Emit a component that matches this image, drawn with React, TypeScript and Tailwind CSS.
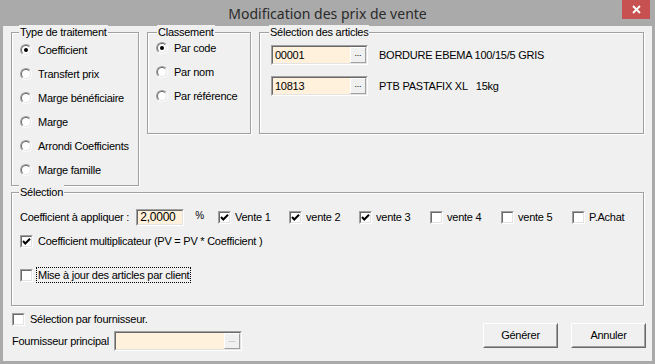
import React from "react";

function Radio({ checked = false }: { checked?: boolean }) {
  return (
    <span className="relative inline-block w-[12px] h-[12px] shrink-0 rounded-full border border-t-[#a0a0a0] border-l-[#a0a0a0] border-r-white border-b-white">
      <span className="absolute inset-0 flex items-center justify-center rounded-full border border-t-[#696969] border-l-[#696969] border-r-[#e3e3e3] border-b-[#e3e3e3] bg-white">
        {checked && <span className="block w-[4px] h-[4px] rounded-full bg-black" />}
      </span>
    </span>
  );
}

function Check({ checked = false }: { checked?: boolean }) {
  return (
    <span className="inline-block w-[13px] h-[13px] shrink-0 border border-t-[#a0a0a0] border-l-[#a0a0a0] border-r-white border-b-white">
      <span className="relative block w-full h-full border border-t-[#696969] border-l-[#696969] border-r-[#e3e3e3] border-b-[#e3e3e3] bg-white">
        {checked && (
          <svg className="absolute left-0 top-0" width="9" height="9" viewBox="0 0 9 9">
            <path d="M1 4 L3.3 6.5 L8 1.8" fill="none" stroke="#000" strokeWidth="2" />
          </svg>
        )}
      </span>
    </span>
  );
}

function Group({
  title,
  titleLeft,
  className,
  children,
}: {
  title: string;
  titleLeft: string;
  className: string;
  children?: React.ReactNode;
}) {
  return (
    <div className={"relative shrink-0 border border-[#a0a0a0] shadow-[inset_1px_1px_0_#ffffff,1px_1px_0_#ffffff] " + className}>
      <span className={"absolute top-[-8px] px-[1px] bg-[#f0f0f0] leading-[14px] " + titleLeft}>{title}</span>
      {children}
    </div>
  );
}

function RadioRow({ label, checked = false }: { label: string; checked?: boolean }) {
  return (
    <div className="flex h-[24px] items-center gap-[6px]">
      <Radio checked={checked} />
      <span className="whitespace-nowrap">{label}</span>
    </div>
  );
}

function Edit({ value, width, disabled = false }: { value: string; width: string; disabled?: boolean }) {
  return (
    <div className={"flex h-[20px] shrink-0 border border-t-[#a0a0a0] border-l-[#a0a0a0] border-r-white border-b-white " + width}>
      <div className="flex flex-1 border border-t-[#696969] border-l-[#696969] border-r-[#e3e3e3] border-b-[#e3e3e3]">
        <div className="flex flex-1 items-center bg-[#fff1dc] pl-[2px] leading-none">{value}</div>
        <div className="flex w-[16px] items-center justify-center border border-t-white border-l-white border-r-[#a0a0a0] border-b-[#a0a0a0] bg-[#f0f0f0]">
          <span className={"text-[9px] leading-none mt-[-3px] " + (disabled ? "text-[#a0a0a0]" : "text-black")}>...</span>
        </div>
      </div>
    </div>
  );
}

function CheckRow({ label, checked = false, w }: { label: string; checked?: boolean; w: string }) {
  return (
    <div className={"flex items-center gap-[4px] " + w}>
      <Check checked={checked} />
      <span className="whitespace-nowrap">{label}</span>
    </div>
  );
}

function Button({ label }: { label: string }) {
  return (
    <div className="flex w-[75px] h-[25px] border border-t-white border-l-white border-r-[#696969] border-b-[#696969]">
      <div className="flex flex-1 items-center justify-center border border-t-[#f0f0f0] border-l-[#f0f0f0] border-r-[#a0a0a0] border-b-[#a0a0a0] bg-[#f0f0f0]">
        {label}
      </div>
    </div>
  );
}

export default function App() {
  return (
    <div className="w-[655px] h-[364px] bg-[#aaaaaa] flex flex-col font-['Liberation_Sans',Arial,sans-serif] text-[11px] text-black tracking-[-0.25px] overflow-hidden">
      <div className="relative flex h-[26px] shrink-0 items-center justify-center">
        <span className="text-[14px] tracking-normal text-[#2a2a2a] font-['Noto_Sans',sans-serif] mt-[1px]">Modification des prix de vente</span>
        <div className="absolute right-[5px] top-0 flex w-[28px] h-[19px] items-center justify-center bg-[#c75050]">
          <svg width="9" height="9" viewBox="0 0 9 9">
            <path d="M1 1 L8 8 M8 1 L1 8" stroke="#fff" strokeWidth="1.8" />
          </svg>
        </div>
      </div>
      <div className="mx-[3px] mb-[3px] flex flex-1 flex-col bg-[#f0f0f0] px-[8px] pt-[6px]">
        <div className="flex items-start gap-[8px]">
          <Group title="Type de traitement" titleLeft="left-[7px]" className="w-[128px] h-[154px]">
            <div className="flex flex-col pl-[8px] pt-[5px]">
              <RadioRow label="Coefficient" checked />
              <RadioRow label="Transfert prix" />
              <RadioRow label="Marge bénéficiaire" />
              <RadioRow label="Marge" />
              <RadioRow label="Arrondi Coefficients" />
              <RadioRow label="Marge famille" />
            </div>
          </Group>
          <Group title="Classement" titleLeft="left-[9px]" className="w-[104px] h-[102px]">
            <div className="flex flex-col pl-[8px] pt-[3px]">
              <RadioRow label="Par code" checked />
              <RadioRow label="Par nom" />
              <RadioRow label="Par référence" />
            </div>
          </Group>
          <Group title="Sélection des articles" titleLeft="left-[9px]" className="w-[385px] h-[102px]">
            <div className="flex flex-col gap-[11px] pl-[11px] pt-[12px]">
              <div className="flex items-center">
                <Edit value="00001" width="w-[97px]" />
                <span className="ml-[11px] whitespace-nowrap">BORDURE EBEMA 100/15/5 GRIS</span>
              </div>
              <div className="flex items-center">
                <Edit value="10813" width="w-[97px]" />
                <span className="ml-[11px] whitespace-pre">PTB PASTAFIX XL   15kg</span>
              </div>
            </div>
          </Group>
        </div>
        <Group title="Sélection" titleLeft="left-[7px]" className="mt-[6px] w-full h-[114px]">
          <div className="flex flex-col pl-[8px] pt-[15px]">
            <div className="flex h-[18px] items-center">
              <span className="w-[118px] whitespace-nowrap">Coefficient à appliquer :</span>
              <div className="flex w-[48px] h-[17px] shrink-0 border border-t-[#a0a0a0] border-l-[#a0a0a0] border-r-white border-b-white">
                <div className="flex flex-1 items-end border border-t-[#696969] border-l-[#696969] border-r-[#e3e3e3] border-b-[#e3e3e3] bg-[#fff1dc] pl-[2px] text-[12px] leading-[13px]">
                  2,0000
                </div>
              </div>
              <span className="ml-[11px] w-[23px] mt-[-4px] text-[10px]">%</span>
              <CheckRow label="Vente 1" checked w="w-[72px]" />
              <CheckRow label="vente 2" checked w="w-[71px]" />
              <CheckRow label="vente 3" checked w="w-[72px]" />
              <CheckRow label="vente 4" w="w-[72px]" />
              <CheckRow label="vente 5" w="w-[72px]" />
              <CheckRow label="P.Achat" w="w-[72px]" />
            </div>
            <div className="mt-[6px] flex h-[18px] items-center gap-[5px]">
              <Check checked />
              <span className="whitespace-nowrap">Coefficient multiplicateur (PV = PV * Coefficient )</span>
            </div>
            <div className="mt-[16px] flex h-[18px] items-center gap-[3px]">
              <Check />
              <span className="whitespace-nowrap border border-dotted border-black px-[1px] leading-[14px]">Mise à jour des articles par client</span>
            </div>
          </div>
        </Group>
        <div className="flex">
          <div className="flex flex-col">
            <div className="ml-[1px] mt-[5px] flex h-[16px] items-center gap-[5px]">
              <Check />
              <span className="whitespace-nowrap">Sélection par fournisseur.</span>
            </div>
            <div className="mt-[4px] flex h-[20px] items-center">
              <span className="ml-[1px] w-[102px] whitespace-nowrap">Fournisseur principal</span>
              <Edit value="" width="w-[128px]" disabled />
            </div>
          </div>
          <div className="ml-auto mr-[-2px] mt-[17px] flex gap-[13px]">
            <Button label="Générer" />
            <Button label="Annuler" />
          </div>
        </div>
      </div>
    </div>
  );
}
